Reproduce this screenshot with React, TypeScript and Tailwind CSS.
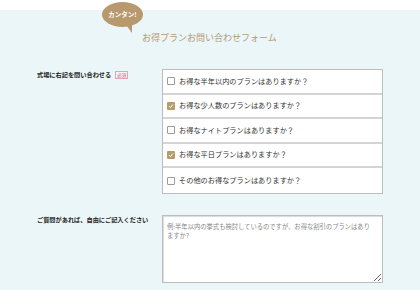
import React from "react";

const plans = [
  { label: "お得な半年以内のプランはありますか？", checked: false },
  { label: "お得な少人数のプランはありますか？", checked: true },
  { label: "お得なナイトプランはありますか？", checked: false },
  { label: "お得な平日プランはありますか？", checked: true },
  { label: "その他のお得なプランはありますか？", checked: false },
];

function Check({ checked }: { checked: boolean }) {
  if (checked) {
    return (
      <span className="flex h-[8px] w-[8px] shrink-0 items-center justify-center rounded-[1px] bg-[#b99b6e]">
        <svg width="6" height="6" viewBox="0 0 6 6">
          <path d="M1 3.2 L2.4 4.6 L5 1.4" stroke="#fff" strokeWidth="1" fill="none" />
        </svg>
      </span>
    );
  }
  return <span className="h-[8px] w-[8px] shrink-0 rounded-[1px] border border-[#9a9a9a] bg-white" />;
}

export default function App() {
  return (
    <div
      className="h-[290px] w-[420px] overflow-hidden bg-white text-[#333]"
      style={{ fontFamily: '"Noto Sans CJK JP", "Noto Sans", sans-serif' }}
    >
      <div className="h-[10px]" />
      <div className="relative h-[280px] bg-[#ebf6f8]">
        {/* bubble */}
        <div className="absolute left-[102px] top-[-8px]">
          <div className="flex h-[25px] w-[41px] items-center justify-center rounded-[50%] bg-[#b8986d] text-[6.5px] font-bold text-white">
            カンタン!
          </div>
          <svg className="absolute left-[22px] top-[20px]" width="9" height="12" viewBox="0 0 9 12">
            <path d="M0 0 L8 11 L8 0 Z" fill="#b8986d" />
          </svg>
        </div>

        <div className="pl-[142px] pt-[23px] text-[9px] leading-[10px] text-[#b39a74]">
          お得プランお問い合わせフォーム
        </div>

        {/* checkbox row */}
        <div className="mt-[26px] flex pl-[37px]">
          <div className="flex w-[125px] items-center gap-[4px] self-start pt-[2px]">
            <span className="text-[6.2px] font-bold leading-[8px] text-[#222]">式場に右記を問い合わせる</span>
            <span className="flex h-[8px] w-[13px] items-center justify-center border border-[#e9a2ae] text-[4.5px] leading-none text-[#e2607a]">
              必須
            </span>
          </div>
          <div className="w-[221px] border border-[#bdbdbd] bg-white">
            {plans.map((p, i) => (
              <div
                key={i}
                className={
                  "flex h-[24.6px] items-center gap-[4px] pl-[4px] " +
                  (i < plans.length - 1 ? "border-b-2 border-[#d4d4d4]" : "")
                }
              >
                <Check checked={p.checked} />
                <span className="text-[7.2px] leading-none text-[#333]">{p.label}</span>
              </div>
            ))}
          </div>
        </div>

        {/* textarea row */}
        <div className="mt-[21px] flex pl-[37px]">
          <div className="w-[125px] pt-[1px] text-[6.2px] font-bold leading-[8px] text-[#222]">
            ご質問があれば、自由にご記入ください
          </div>
          <textarea
            className="h-[68px] w-[221px] resize border border-[#bdbdbd] bg-white px-[4px] pt-[6px] text-[6.3px] leading-[9.5px] text-[#333] shadow-[inset_1px_1px_1px_rgba(0,0,0,0.15)] outline-none placeholder:text-[#888]"
            style={{ fontFamily: '"Noto Sans CJK JP", "Noto Sans", sans-serif' }}
            placeholder={"例:半年以内の挙式も検討しているのですが、お得な割引のプランはあり\nますか?"}
          />
        </div>
      </div>
    </div>
  );
}
